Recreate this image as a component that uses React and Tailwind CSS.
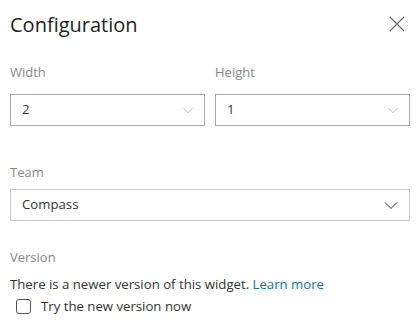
import { useState } from 'react';

function Chevron({ className }) {
  return (
    <svg className={className} viewBox="0 0 16 16" fill="none" stroke="currentColor" strokeWidth={1}>
      <path d="M2 5.5l6 6 6-6" />
    </svg>
  );
}

function SmallSelect({ value }) {
  return (
    <div className="flex h-8 w-full items-center justify-between border border-[#a6a6a6] bg-white pl-[11px] pr-[10px]">
      <span className="text-[13.2px] text-[#333]">{value}</span>
      <Chevron className="h-[12px] w-[12px] text-[#a0a0a0]" />
    </div>
  );
}

export default function App() {
  const [tryNew, setTryNew] = useState(false);

  return (
    <div className="h-[330px] w-[420px] bg-white px-[10px] pt-[11px] font-['Open_Sans',sans-serif] text-[#333]">
      <div className="flex items-start justify-between">
        <h1 className="text-[20px] leading-[28px] text-[#201f1e]">Configuration</h1>
        <button className="mr-[5px] mt-[5px] text-[#666]">
          <svg className="h-[16px] w-[16px]" viewBox="0 0 16 16" stroke="currentColor" strokeWidth={1.1}>
            <path d="M1 1l14 14M15 1L1 15" />
          </svg>
        </button>
      </div>

      <div className="mt-[23px] flex gap-[10px]">
        <div className="flex flex-1 flex-col">
          <label className="mb-3 text-[13px] leading-[20px] text-[#888]">Width</label>
          <SmallSelect value="2" />
        </div>
        <div className="flex flex-1 flex-col">
          <label className="mb-3 text-[13px] leading-[20px] text-[#888]">Height</label>
          <SmallSelect value="1" />
        </div>
      </div>

      <div className="mt-[36px] flex flex-col">
        <label className="mb-[7px] text-[13px] leading-[20px] text-[#888]">Team</label>
        <div className="flex h-8 items-center justify-between border border-[#c8c8c8] bg-white pl-[11px] pr-[10px]">
          <span className="text-[13.2px] text-[#333]">Compass</span>
          <Chevron className="h-[16px] w-[16px] text-[#333]" />
        </div>
      </div>

      <div className="mt-[26px] flex flex-col">
        <label className="text-[13px] leading-[20px] text-[#888]">Version</label>
        <p className="mt-[7px] text-[13.2px] leading-[20px] text-[#333]">
          There is a newer version of this widget.{' '}
          <a className="text-[#106ebe]">Learn more</a>
        </p>
        <label className="ml-[6px] mt-[2px] flex items-center gap-[10px] text-[13.2px] leading-[20px] text-[#333]">
          <button
            onClick={() => setTryNew(!tryNew)}
            className="h-[15px] w-[15px] rounded-[3px] border border-[#555] bg-white"
          />
          Try the new version now
        </label>
      </div>
    </div>
  );
}
